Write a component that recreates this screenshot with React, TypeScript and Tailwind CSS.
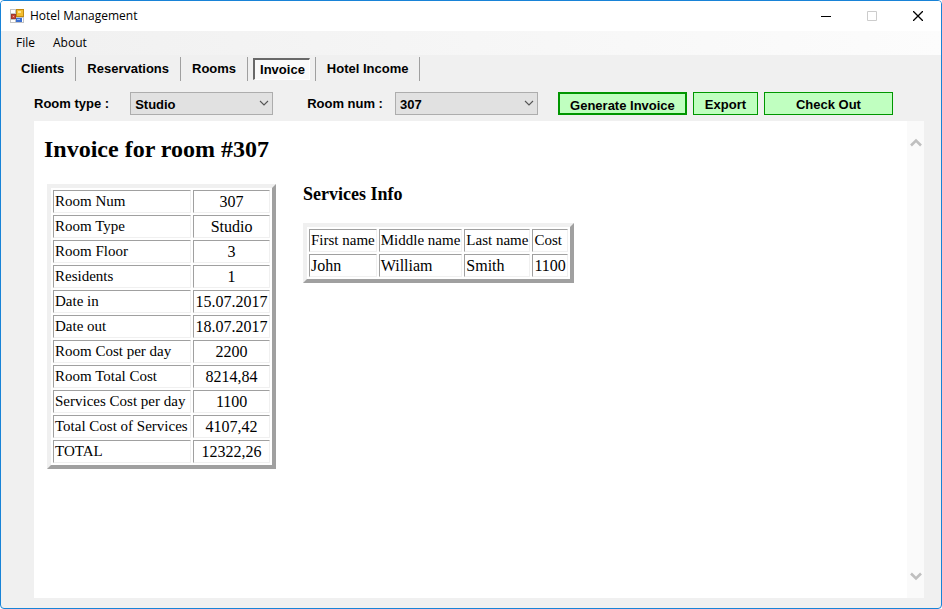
import { useState } from "react";
import type { ReactNode } from "react";

const tabs = ["Clients", "Reservations", "Rooms", "Invoice", "Hotel Income"];

const invoiceRows = [
  ["Room Num", "307"],
  ["Room Type", "Studio"],
  ["Room Floor", "3"],
  ["Residents", "1"],
  ["Date in", "15.07.2017"],
  ["Date out", "18.07.2017"],
  ["Room Cost per day", "2200"],
  ["Room Total Cost", "8214,84"],
  ["Services Cost per day", "1100"],
  ["Total Cost of Services", "4107,42"],
  ["TOTAL", "12322,26"],
];

const serviceHeads = ["First name", "Middle name", "Last name", "Cost"];
const services = [["John", "William", "Smith", "1100"]];

const cell =
  "border border-t-[#a0a0a0] border-l-[#a0a0a0] border-b-[#f0f0f0] border-r-[#f0f0f0] p-px font-normal whitespace-nowrap";
const headCell = `${cell} text-left text-[15px]`;
const dataCell = `${cell} text-[16px]`;
const table =
  "border-separate border-spacing-[2px] border-4 border-t-[#f0f0f0] border-l-[#f0f0f0] border-b-[#a0a0a0] border-r-[#a0a0a0] leading-[19px]";

function AppIcon() {
  return (
    <svg className="h-[14px] w-[14px]" viewBox="0 0 14 14" shapeRendering="crispEdges" aria-hidden="true">
      <rect width="14" height="14" fill="#c4c4c4" />
      <rect x="1" y="1" width="4" height="3" fill="#fff" />
      <rect x="1" y="11" width="4" height="2" fill="#fff" />
      <rect x="1" y="5" width="5" height="5" fill="#a3362b" />
      <rect x="2" y="6" width="3" height="3" fill="#c9473a" />
      <rect x="3" y="7" width="1" height="1" fill="#f0a79c" />
      <rect x="6" y="0" width="8" height="8" fill="#c28a10" />
      <rect x="7" y="1" width="6" height="6" fill="#f3bd2e" />
      <rect x="8" y="2" width="3" height="2" fill="#fde38c" />
      <rect x="6" y="9" width="6" height="4" fill="#3b6fd0" />
      <rect x="7" y="10" width="3" height="1" fill="#9cc0f7" />
      <rect x="12" y="9" width="1" height="4" fill="#fff" />
    </svg>
  );
}

function Picker({ id, label, options, gap }: { id: string; label: string; options: string[]; gap: string }) {
  return (
    <div className={`flex items-center ${gap}`}>
      <label htmlFor={id}>{label}</label>
      <div className="relative">
        <select
          id={id}
          className="block h-[23px] w-[143px] appearance-none border border-[#adadad] bg-[#e1e1e1] pt-[2px] pl-1 outline-none"
        >
          {options.map((o) => (
            <option key={o}>{o}</option>
          ))}
        </select>
        <svg className="pointer-events-none absolute top-2 right-1 h-[6px] w-[10px]" viewBox="0 0 10 6" fill="none" aria-hidden="true">
          <path d="M1 1L5 5L9 1" stroke="#555" strokeWidth="1.1" />
        </svg>
      </div>
    </div>
  );
}

function GreenButton({ className, children }: { className: string; children: ReactNode }) {
  return (
    <button className={`h-[23px] border-[#009600] bg-[#c0ffc0] pt-[2px] text-center leading-[19px] ${className}`}>
      {children}
    </button>
  );
}

function Arrow({ label, d }: { label: string; d: string }) {
  return (
    <button aria-label={label} className="flex h-[17px] w-[17px] items-center justify-center">
      <svg className="h-[9px] w-[12px]" viewBox="0 0 12 9" fill="none" aria-hidden="true">
        <path d={d} stroke="#bfbfbf" strokeWidth="2.6" />
      </svg>
    </button>
  );
}

export default function App() {
  const [active, setActive] = useState("Invoice");
  return (
    <div className="flex min-h-screen flex-col rounded-[4px] border border-[#1883d7] bg-[#f0f0f0] text-black">
      <header className="flex h-[30px] items-center rounded-t-[3px] bg-white pl-[9px] font-['Open_Sans',sans-serif] text-[12px]">
        <AppIcon />
        <h1 className="ml-[6px] flex-1">Hotel Management</h1>
        <button aria-label="Minimize" className="flex h-full w-[46px] items-center justify-center">
          <svg className="h-[10px] w-[10px]" viewBox="0 0 10 10" aria-hidden="true">
            <path d="M0 5.5H10" stroke="#000" />
          </svg>
        </button>
        <button aria-label="Maximize" disabled className="flex h-full w-[46px] items-center justify-center">
          <svg className="h-[10px] w-[10px]" viewBox="0 0 10 10" fill="none" aria-hidden="true">
            <path d="M.5.5H9.500V9.500H.5Z" stroke="#ccc" />
          </svg>
        </button>
        <button aria-label="Close" className="flex h-full w-[46px] items-center justify-center">
          <svg className="h-[10px] w-[10px]" viewBox="0 0 10 10" aria-hidden="true">
            <path d="M0 0L10 10M10 0L0 10" stroke="#000" strokeWidth="1.3" />
          </svg>
        </button>
      </header>

      <nav className="flex h-[24px] items-center gap-[18px] bg-linear-to-r from-[#f0f0f0] to-[#fcfcfc] pl-[15px] font-['Open_Sans',sans-serif] text-[12px]">
        <button>File</button>
        <button>About</button>
      </nav>

      <div className="flex h-[27px] items-center pl-[9px] font-['Liberation_Sans',sans-serif] text-[13px] font-bold" role="tablist">
        {tabs.map((t) => (
          <div key={t} className="flex h-[24px] items-center border-r border-[#a0a0a0] px-[5px]">
            <button
              role="tab"
              aria-selected={active === t}
              onClick={() => setActive(t)}
              className={
                active === t
                  ? "h-[22px] border-t-2 border-r border-b border-l-2 border-t-[#696969] border-r-white border-b-white border-l-[#696969] bg-[#fafafa] pr-1 pl-[5px]"
                  : "h-[22px] px-[6px]"
              }
            >
              {t}
            </button>
          </div>
        ))}
      </div>

      <main className="flex flex-1 flex-col pr-[17px] pb-[10px] pl-[33px] font-['Liberation_Sans',sans-serif] text-[13px] font-bold">
        <div className="flex h-[39px] items-start pt-[10px]">
          <div className="flex gap-[34px]">
            <Picker id="room-type" label="Room type :" options={["Studio"]} gap="gap-[21px]" />
            <Picker id="room-num" label="Room num :" options={["307"]} gap="gap-[12px]" />
          </div>
          <div className="ml-5 flex gap-[6px]">
            <GreenButton className="w-[129px] border-2">Generate Invoice</GreenButton>
            <GreenButton className="w-[65px] border">Export</GreenButton>
            <GreenButton className="w-[129px] border">Check Out</GreenButton>
          </div>
        </div>

        <section className="flex flex-1 bg-white font-['Liberation_Serif',serif] font-normal">
          <div className="flex-1 pt-[14px] pl-[10px]">
            <h2 className="text-[24px] leading-[28px] font-bold">Invoice for room #307</h2>
            <div className="mt-[21px] ml-[3px] flex items-start gap-[27px]">
              <table className={`${table} w-[229px]`}>
                <tbody>
                  {invoiceRows.map(([name, value]) => (
                    <tr key={name}>
                      <th scope="row" className={headCell}>{name}</th>
                      <td className={`${dataCell} text-center`}>{value}</td>
                    </tr>
                  ))}
                </tbody>
              </table>
              <div>
                <h3 className="mb-[18px] text-[18px] leading-[21px] font-bold">Services Info</h3>
                <table className={`${table} w-[270px]`}>
                  <thead>
                    <tr>
                      {serviceHeads.map((h) => (
                        <th key={h} scope="col" className={headCell}>{h}</th>
                      ))}
                    </tr>
                  </thead>
                  <tbody>
                    {services.map((row) => (
                      <tr key={row[0]}>
                        {row.map((v) => (
                          <td key={v} className={dataCell}>{v}</td>
                        ))}
                      </tr>
                    ))}
                  </tbody>
                </table>
              </div>
            </div>
          </div>
          <div className="flex w-[17px] flex-col justify-between bg-[#fafafa] py-[13px]">
            <Arrow label="Scroll up" d="M1 7.500L6 2.500L11 7.500" />
            <Arrow label="Scroll down" d="M1 1.500L6 6.500L11 1.500" />
          </div>
        </section>
      </main>
    </div>
  );
}
